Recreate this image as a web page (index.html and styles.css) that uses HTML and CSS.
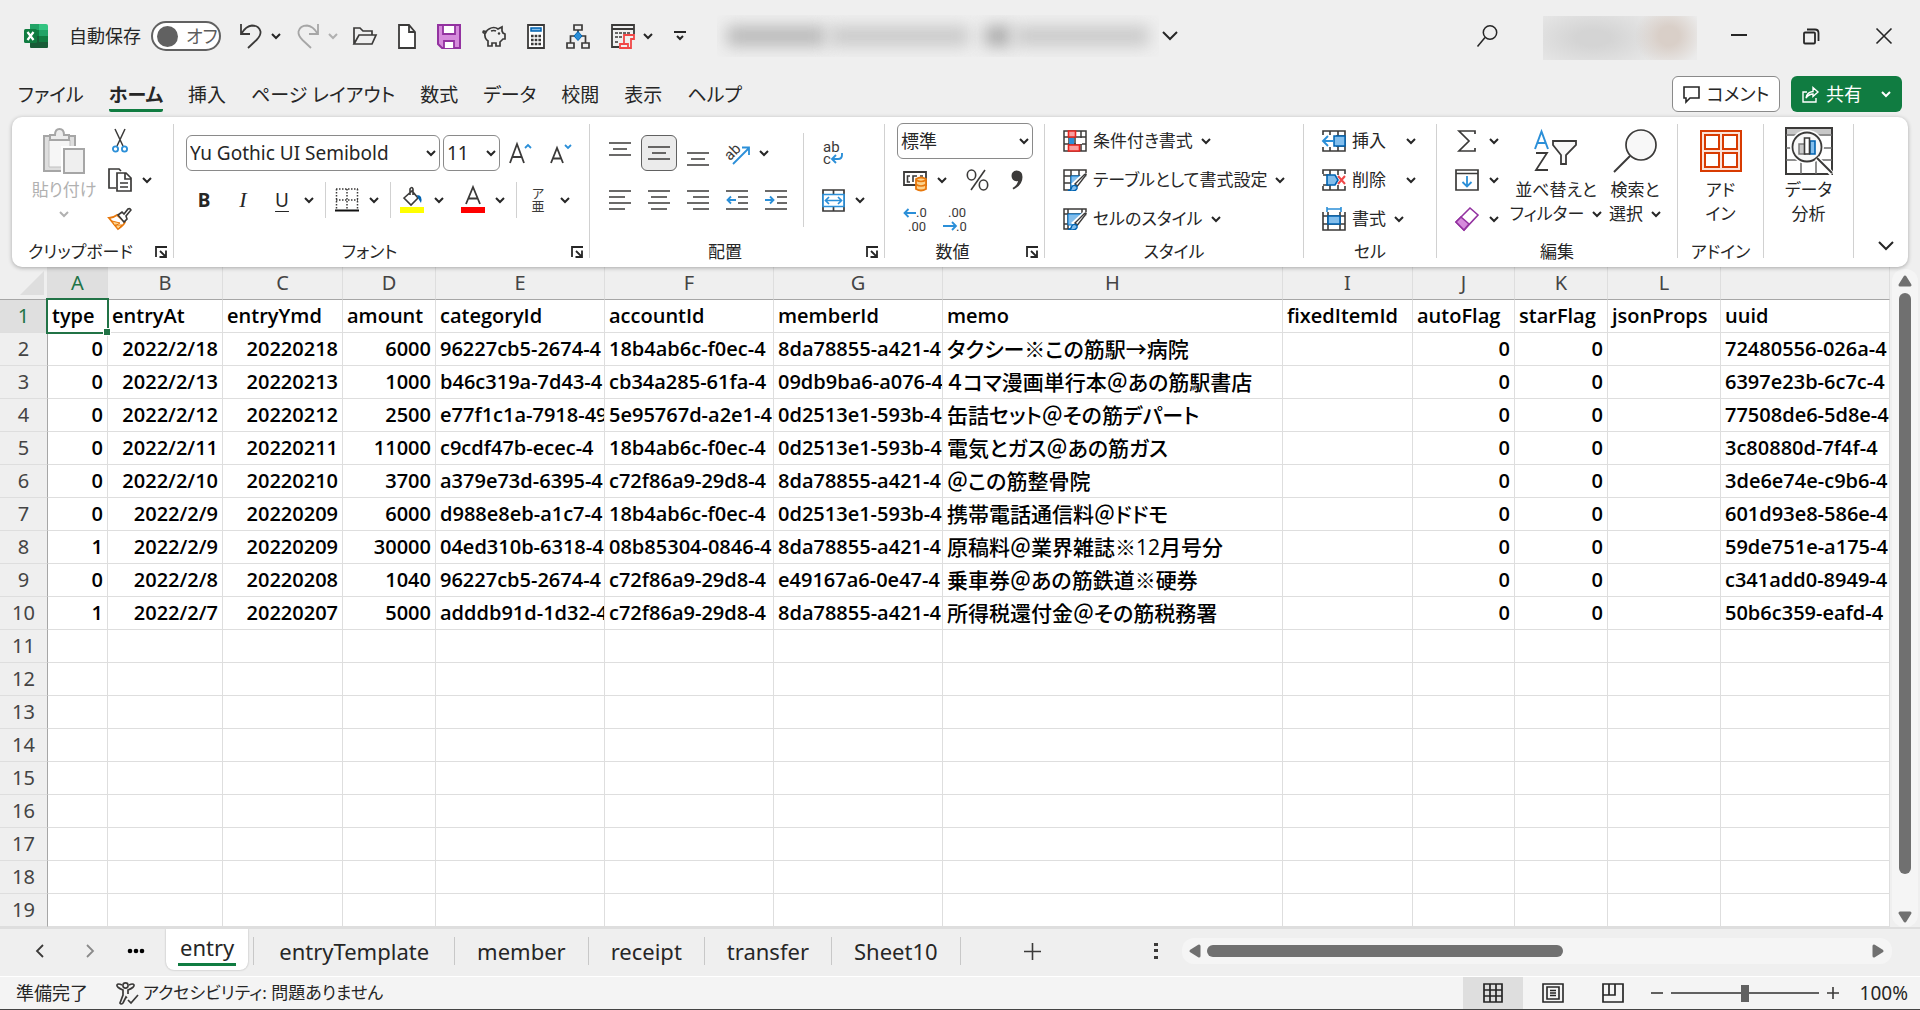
FILE: index.html
```html
<!DOCTYPE html>
<html lang="ja">
<head>
<meta charset="utf-8">
<title>Excel</title>
<link rel="stylesheet" href="styles.css">
</head>
<body>
<svg class="defs" aria-hidden="true">
  <symbol id="chev" viewBox="0 0 10 7"><path d="M1 1l4 4 4-4" fill="none" stroke="currentColor" stroke-width="2"/></symbol>
  <symbol id="bigchev" viewBox="0 0 16 10"><path d="M1 1l7 7 7-7" fill="none" stroke="currentColor" stroke-width="2"/></symbol>
  <symbol id="launch" viewBox="0 0 12 12"><path d="M1 11V1h11M5 5l5 5M11 4.500v6.500H4.500" fill="none" stroke="currentColor" stroke-width="1.800"/></symbol>
  <symbol id="brush" viewBox="0 0 24 22"><path d="M24 7L12 17l-7 5H24z" fill="#fff"/><path d="M8 15L20 4h4v3L13 19z" fill="#fff"/><path d="M12 15L21.500 5.500q2-1.500 1.500.5L14.500 17z" fill="#fff" stroke="#3b3a39" stroke-width="1.400"/><path d="M5 21.500q3.500-.5 3.500-3 1-2.500 3.500-2 2.500.5 2 3-1 2.500-4.500 2.500z" fill="#83beec" stroke="#0063b1" stroke-width="1.400"/></symbol>
</svg>

<header class="titlebar">
  <div class="quick">
    <svg class="logo" width="24" height="24" viewBox="0 0 24 24"><path d="M6 0h9v6H6z" fill="#21a366"/><path d="M15 0h7q2 0 2 2v4h-9z" fill="#33c481"/><path d="M6 6h9v6H6z" fill="#107c41"/><path d="M15 6h9v6h-9z" fill="#21a366"/><path d="M15 12h9v6h-9z" fill="#107c41"/><path d="M6 12h9v6h9v5q0 1-1 1H7q-1 0-1-1z" fill="#185c37"/><rect y="5" width="13" height="14" rx="1.500" fill="#107c41"/><path d="M3.500 8l6 8M9.500 8l-6 8" stroke="#fff" stroke-width="2.200"/></svg>
    <label class="autosave">自動保存<span class="toggle"><input type="checkbox"><span>オフ</span></span></label>
    <button class="tb undo" aria-label="元に戻す"><svg width="24" height="26" viewBox="0 0 24 26"><path d="M2 1v10h9M2.500 10.500Q7 3 13 2.500q7 0 8.500 6 .5 4-4 8.500L9 25" fill="none" stroke="#3b3a39" stroke-width="1.800"/></svg><svg class="chev"><use href="#chev"/></svg></button>
    <button class="tb redo" aria-label="やり直し"><svg width="24" height="26" viewBox="0 0 24 26"><path d="M22 1v10h-9M21.500 10.500Q17 3 11 2.500q-7 0-8.500 6-.5 4 4 8.500L15 25" fill="none" stroke="#a6a6a6" stroke-width="1.800"/></svg><svg class="chev"><use href="#chev"/></svg></button>
    <button class="tb" aria-label="開く"><svg width="24" height="18" viewBox="0 0 24 18"><path d="M1 17V1h6l3 3h9v4M1 17L6 8h17l-4 9z" fill="none" stroke="#3b3a39" stroke-width="1.700"/></svg></button>
    <button class="tb" aria-label="新規"><svg width="18" height="25" viewBox="0 0 18 25"><path d="M1 1h10l6 7v16H1zM11 1v7h6" fill="#fff" stroke="#3b3a39" stroke-width="1.800"/></svg></button>
    <button class="tb" aria-label="保存"><svg width="24" height="25" viewBox="0 0 24 25"><path d="M1 1h22v23H5l-4-4z" fill="#d68bdc" stroke="#9332a0" stroke-width="2"/><path d="M6 1h12v9H6zM7 24v-7h10v7" fill="#fff" stroke="#9332a0" stroke-width="1.800"/></svg></button>
    <button class="tb" aria-label="貯金箱"><svg width="24" height="22" viewBox="0 0 24 22"><path d="M7 4q5-3 9 0l4-2v4l1 2 2 1v5h-2l-3 3v4h-4v-3h-4v3H6v-5q-4-3-3-8Q0 8 1.500 6q2 0 2.500 1 1-2 3-3zM9 6q3-1 5 0" fill="none" stroke="#3b3a39" stroke-width="1.700"/><circle cx="17" cy="8.500" r="1.200" fill="#3b3a39"/></svg></button>
    <button class="tb" aria-label="電卓"><svg width="18" height="25" viewBox="0 0 18 25"><path d="M1 1h16v23H1z" fill="#fff" stroke="#3b3a39" stroke-width="1.800"/><path d="M4 4h10v3H4z" fill="#83beec" stroke="#0063b1" stroke-width="1.500"/><path d="M4 12h10M4 16h10M4 20h10" stroke="#3b3a39" stroke-width="2.600" stroke-dasharray="2.600 1.100"/></svg></button>
    <button class="tb" aria-label="組織図"><svg width="24" height="25" viewBox="0 0 24 25"><path d="M8 1h8v5H8zM1 19h7v5H1zM16 19h7v5h-7zM12 6v4M4.500 19v-7h15v7" fill="none" stroke="#3b3a39" stroke-width="1.700"/><path d="M12 7.500l4 4.500-4 4.500L8 12z" fill="#2b8fd8" stroke="#0063b1"/></svg></button>
    <button class="tb" aria-label="フォーム"><svg width="24" height="26" viewBox="0 0 24 26"><path d="M8 24H1V2h22v9M1 6h22" fill="none" stroke="#3b3a39" stroke-width="1.800"/><path d="M4 10h15M4 14h7M4 19h4" stroke="#3b3a39" stroke-width="1.500" stroke-dasharray="3 1"/><path d="M13 21V12h10v4h-3v9H9v-4h8v4" fill="none" stroke="#f04747" stroke-width="1.800"/></svg><svg class="chev"><use href="#chev"/></svg></button>
    <button class="tb" aria-label="クイック アクセス ツール バーのユーザー設定"><svg width="12" height="10" viewBox="0 0 12 10"><path d="M0 1h12M3 5l3 3 3-3" fill="none" stroke="#262626" stroke-width="2"/></svg></button>
  </div>
  <div class="doctitle" aria-label="ファイル名"><span class="smudge s1"></span><span class="smudge s2"></span><span class="smudge s3"></span><span class="smudge s4"></span></div>
  <svg class="titlechev" width="16" height="10"><use href="#bigchev"/></svg>
  <div class="wincontrols">
    <button aria-label="検索"><svg width="21" height="22" viewBox="0 0 21 22"><circle cx="13" cy="7.500" r="6.700" fill="none" stroke="#262626" stroke-width="1.500"/><path d="M8 12.500L.5 21.500" stroke="#262626" stroke-width="1.500"/></svg></button>
    <div class="account" aria-label="アカウント"></div>
    <button aria-label="最小化"><svg width="16" height="16" viewBox="0 0 16 16"><path d="M0 7h16" stroke="#262626" stroke-width="2"/></svg></button>
    <button aria-label="元に戻す (縮小)"><svg width="17" height="17" viewBox="0 0 17 17"><rect x="1" y="4.500" width="11" height="11" rx="1" fill="none" stroke="#262626" stroke-width="1.800"/><path d="M4 1.500h8q3.500 0 3.500 3.500v8" fill="none" stroke="#262626" stroke-width="1.800"/></svg></button>
    <button aria-label="閉じる"><svg width="16" height="16" viewBox="0 0 16 16"><path d="M.5.5l15 15M15.500.5l-15 15" stroke="#262626" stroke-width="1.600"/></svg></button>
  </div>
</header>

<nav class="menubar">
  <a href="#">ファイル</a><a href="#" class="on">ホーム</a><a href="#">挿入</a><a href="#">ページ レイアウト</a><a href="#">数式</a><a href="#">データ</a><a href="#">校閲</a><a href="#">表示</a><a href="#">ヘルプ</a>
  <button class="comment"><svg width="17" height="17" viewBox="0 0 17 17"><path d="M1 1h15v11H7l-4 4v-4H1z" fill="none" stroke="#262626" stroke-width="1.600"/></svg>コメント</button>
  <button class="share"><svg width="17" height="17" viewBox="0 0 17 17"><path d="M5 6H1v10h13v-4M4 12q1-6 7-6.500V1.500L16 6l-5 4.500V8Q7 8 4 12z" fill="none" stroke="#fff" stroke-width="1.400"/></svg>共有<svg class="chev"><use href="#chev"/></svg></button>
</nav>

<main class="ribbon">
  <section class="group clip">
    <div class="tools">
      <button class="big paste" disabled><span class="slot"><svg width="42" height="46" viewBox="0 0 42 46"><path d="M1 8h31v35H1z" fill="#dedede" stroke="#a6a6a6" stroke-width="2"/><path d="M6 12h21v27H6z" fill="#f6f6f6" stroke="#c0c0c0"/><path d="M7 12V7h5q0-6 4.500-6T21 7h5v5z" fill="#ececec" stroke="#a6a6a6" stroke-width="2"/><path d="M18 18h24v28H18z" fill="#fff"/><path d="M21 21h20v24H21z" fill="#efefef" stroke="#a6a6a6" stroke-width="2"/></svg></span><span>貼り付け</span><span><svg class="chev"><use href="#chev"/></svg></span></button>
      <div class="col">
        <div class="row"><button class="ib" aria-label="切り取り"><svg width="16" height="24" viewBox="0 0 16 24"><path d="M3 0l8 17M13 0L5 17" stroke="#3b3a39" stroke-width="1.500"/><circle cx="3.500" cy="20" r="2.600" fill="#fff" stroke="#2b8fd8" stroke-width="1.800"/><circle cx="12.500" cy="20" r="2.600" fill="#fff" stroke="#2b8fd8" stroke-width="1.800"/></svg></button></div>
        <div class="row"><button class="ib" aria-label="コピー"><svg width="24" height="24" viewBox="0 0 24 24"><path d="M8 20H1V1h10l2 2" fill="none" stroke="#3b3a39" stroke-width="1.700"/><path d="M9 5h9l5 5v13H9zM17 5v6h6M12 15h8M12 19h8" fill="#fff" stroke="#3b3a39" stroke-width="1.700"/></svg></button><button class="cb" aria-label="コピーのオプション"><svg class="chev"><use href="#chev"/></svg></button></div>
        <div class="row"><button class="ib" aria-label="書式のコピー"><svg width="24" height="24" viewBox="0 0 24 24"><path d="M1 11l9 11q6-4 7-7L9 8q-4 3-8 3z" fill="#fff" stroke="#e8780c" stroke-width="1.800"/><path d="M4 14l8 2-5 3zM7 18l7 0-4 4z" fill="#fcd28c" stroke="#e8780c"/><path d="M10 8l4-3 2 2 4-5q2-1 3 1l-5 6 1 3-3 3z" fill="#fff" stroke="#3b3a39" stroke-width="1.600"/></svg></button></div>
      </div>
    </div>
    <div class="cap"><span>クリップボード</span><button aria-label="クリップボードの詳細"><svg width="12" height="12"><use href="#launch"/></svg></button></div>
  </section>
  <div class="sep"></div>

  <section class="group font">
    <div class="tools col wide">
      <div class="row">
        <span class="combo name"><select aria-label="フォント名"><option>Yu Gothic UI Semibold</option></select><svg class="chev"><use href="#chev"/></svg></span>
        <span class="combo size"><select aria-label="フォント サイズ"><option>11</option></select><svg class="chev"><use href="#chev"/></svg></span>
        <button class="ib" aria-label="拡大"><svg width="24" height="24" viewBox="0 0 24 24"><path d="M1 22L8 3l7 19M3.500 16h9" fill="none" stroke="#3b3a39" stroke-width="1.800"/><path d="M16 7l3-3 3 3" fill="none" stroke="#2b8fd8" stroke-width="1.800"/></svg></button>
        <button class="ib" aria-label="縮小"><svg width="24" height="24" viewBox="0 0 24 24"><path d="M3 22L9 7l6 15M5 17.500h8" fill="none" stroke="#3b3a39" stroke-width="1.800"/><path d="M17 4l3 3 3-3" fill="none" stroke="#2b8fd8" stroke-width="1.800"/></svg></button>
      </div>
      <div class="row">
        <button class="ib bold">B</button><button class="ib italic">I</button>
        <span class="split"><button class="ib under">U</button><button class="cb" aria-label="下線の種類"><svg class="chev"><use href="#chev"/></svg></button></span>
        <i class="vs"></i>
        <span class="split"><button class="ib" aria-label="罫線"><svg width="24" height="24" viewBox="0 0 24 24"><path d="M1 1h22M1 12h22M1.500 1v20M12 1v20M22.500 1v20" stroke="#3b3a39" stroke-width="1.500" stroke-dasharray="1.500 1.500"/><path d="M0 22.500h24" stroke="#111" stroke-width="2"/></svg></button><button class="cb" aria-label="罫線の種類"><svg class="chev"><use href="#chev"/></svg></button></span>
        <i class="vs"></i>
        <span class="split"><button class="ib" aria-label="塗りつぶしの色"><svg width="24" height="26" viewBox="0 0 24 26"><path d="M4 11l8-7 6 7-7 7zM10 8V2q2-3 3 0v6" fill="#fff" stroke="#3b3a39" stroke-width="1.600"/><path d="M17 8q6 0 4 8-2-3-3-5z" fill="#0063b1"/><path d="M0 20h24v6H0z" fill="#ff0"/></svg></button><button class="cb" aria-label="塗りつぶしの色を選ぶ"><svg class="chev"><use href="#chev"/></svg></button></span>
        <span class="split spaced"><button class="ib" aria-label="フォントの色"><svg width="24" height="26" viewBox="0 0 24 26"><path d="M5 17l7-17 7 17M7.500 11.500h9" fill="none" stroke="#3b3a39" stroke-width="1.800"/><path d="M0 20h24v6H0z" fill="#f00"/></svg></button><button class="cb" aria-label="フォントの色を選ぶ"><svg class="chev"><use href="#chev"/></svg></button></span>
        <i class="vs"></i>
        <span class="split"><button class="ib ruby"><span>ア</span><span>亜</span></button><button class="cb" aria-label="ふりがなの設定"><svg class="chev"><use href="#chev"/></svg></button></span>
      </div>
    </div>
    <div class="cap"><span>フォント</span><button aria-label="フォントの設定"><svg width="12" height="12"><use href="#launch"/></svg></button></div>
  </section>
  <div class="sep"></div>

  <section class="group align">
    <div class="tools">
      <div class="col wide">
        <div class="row">
          <button class="ib" aria-label="上揃え"><svg class="up" width="22" height="14" viewBox="0 0 22 14"><path d="M0 1h22M4 7h14M0 13h22" stroke="#3b3a39" stroke-width="1.700"/></svg></button>
          <button class="ib on" aria-label="上下中央揃え"><svg width="22" height="14" viewBox="0 0 22 14"><path d="M0 1h22M4 7h14M0 13h22" stroke="#3b3a39" stroke-width="1.700"/></svg></button>
          <button class="ib" aria-label="下揃え"><svg class="down" width="22" height="14" viewBox="0 0 22 14"><path d="M0 1h22M4 7h14M0 13h22" stroke="#3b3a39" stroke-width="1.700"/></svg></button>
          <span class="split"><button class="ib" aria-label="方向"><svg width="26" height="26" viewBox="0 0 26 26"><text x="0" y="17" transform="rotate(-45 8 12)" class="ab">ab</text><path d="M9 24L25 8M18 7.500h7V15" fill="none" stroke="#2b8fd8" stroke-width="1.800"/></svg></button><button class="cb" aria-label="方向の設定"><svg class="chev"><use href="#chev"/></svg></button></span>
        </div>
        <div class="row">
          <button class="ib" aria-label="左揃え"><svg width="22" height="20" viewBox="0 0 22 20"><path d="M0 1h22M0 7h16M0 13h22M0 19h16" stroke="#3b3a39" stroke-width="1.700"/></svg></button>
          <button class="ib" aria-label="中央揃え"><svg width="22" height="20" viewBox="0 0 22 20"><path d="M0 1h22M3 7h16M0 13h22M3 19h16" stroke="#3b3a39" stroke-width="1.700"/></svg></button>
          <button class="ib" aria-label="右揃え"><svg width="22" height="20" viewBox="0 0 22 20"><path d="M0 1h22M6 7h16M0 13h22M6 19h16" stroke="#3b3a39" stroke-width="1.700"/></svg></button>
          <button class="ib" aria-label="インデントを減らす"><svg width="22" height="20" viewBox="0 0 22 20"><path d="M0 1h22M12 7h10M12 13h10M0 19h22" stroke="#3b3a39" stroke-width="1.700"/><path d="M10 10H1.500M5 6.500L1.500 10 5 13.500" fill="none" stroke="#2b8fd8" stroke-width="1.800"/></svg></button>
          <button class="ib" aria-label="インデントを増やす"><svg width="22" height="20" viewBox="0 0 22 20"><path d="M0 1h22M12 7h10M12 13h10M0 19h22" stroke="#3b3a39" stroke-width="1.700"/><path d="M0 10h8.500M5 6.500L8.500 10 5 13.500" fill="none" stroke="#2b8fd8" stroke-width="1.800"/></svg></button>
        </div>
      </div>
      <i class="vs tall"></i>
      <div class="col wide">
        <div class="row"><button class="ib" aria-label="折り返して全体を表示する"><svg width="22" height="26" viewBox="0 0 22 26"><text x="1" y="12" class="ab">ab</text><text x="1" y="24" class="ab">c</text><path d="M20 13v2q0 4-4 4h-5M14 15l-4 4 4 4" fill="none" stroke="#2b8fd8" stroke-width="1.900"/></svg></button></div>
        <div class="row split"><button class="ib" aria-label="セルを結合して中央揃え"><svg width="23" height="23" viewBox="0 0 23 23"><path d="M1 1h21v21H1zM11.500 1v21" fill="#fff" stroke="#3b3a39" stroke-width="1.700"/><path d="M1 5.500h21v12H1z" fill="#fff" stroke="#2b8fd8" stroke-width="1.700"/><path d="M4 11.500h15M7 8l-3.500 3.500L7 15M16 8l3.500 3.500L16 15" fill="none" stroke="#2b8fd8" stroke-width="1.700"/></svg></button><button class="cb" aria-label="結合の種類"><svg class="chev"><use href="#chev"/></svg></button></div>
      </div>
    </div>
    <div class="cap"><span>配置</span><button aria-label="配置の設定"><svg width="12" height="12"><use href="#launch"/></svg></button></div>
  </section>
  <div class="sep"></div>

  <section class="group number">
    <div class="tools col">
      <span class="combo format"><select aria-label="数値の書式"><option>標準</option></select><svg class="chev"><use href="#chev"/></svg></span>
      <div class="row">
        <span class="split"><button class="ib" aria-label="通貨表示形式"><svg width="24" height="22" viewBox="0 0 24 22"><path d="M1 3h22v13H1z" fill="#fff" stroke="#3b3a39" stroke-width="1.800"/><path d="M7 7H4.500v6H7M14 7h-4v6M17 7h3" fill="none" stroke="#3b3a39" stroke-width="1.600"/><path d="M13 10q5-3 10 0v10q-5 3-10 0z" fill="#fcd28c" stroke="#e8780c" stroke-width="1.800"/><path d="M13 11q5 3 10 0M13 15.500q5 3 10 0" fill="none" stroke="#e8780c" stroke-width="1.500"/></svg></button><button class="cb" aria-label="通貨の種類"><svg class="chev"><use href="#chev"/></svg></button></span>
        <button class="ib percent" aria-label="パーセント"><svg width="23" height="22" viewBox="0 0 23 22"><path d="M19 1L5 21" stroke="#3b3a39" stroke-width="1.600"/><ellipse cx="5.500" cy="6" rx="4.200" ry="5" fill="none" stroke="#3b3a39" stroke-width="1.600"/><ellipse cx="17.500" cy="16" rx="4.200" ry="5" fill="none" stroke="#3b3a39" stroke-width="1.600"/></svg></button>
        <button class="ib spaced" aria-label="桁区切り"><svg width="12" height="20" viewBox="0 0 12 20"><path d="M5.500.5q6 0 6 6.500 0 8-9 12.500l-1-1.500q5-3 5.500-7-6 1-6.500-5 0-5 5-5.500z" fill="#3b3a39"/></svg></button>
      </div>
      <div class="row">
        <button class="ib" aria-label="小数点以下の表示桁数を増やす"><svg width="26" height="28" viewBox="0 0 26 28"><text x="14" y="12" class="dec">.0</text><text x="6" y="26" class="dec">.00</text><path d="M14 8H2.500M6.500 4l-4 4 4 4" fill="none" stroke="#2b8fd8" stroke-width="1.800"/></svg></button>
        <button class="ib spaced" aria-label="小数点以下の表示桁数を減らす"><svg width="26" height="28" viewBox="0 0 26 28"><text x="6" y="12" class="dec">.00</text><text x="14" y="26" class="dec">.0</text><path d="M1 21h12.500M10 17l4 4-4 4" fill="none" stroke="#2b8fd8" stroke-width="1.800"/></svg></button>
      </div>
    </div>
    <div class="cap"><span>数値</span><button aria-label="数値の設定"><svg width="12" height="12"><use href="#launch"/></svg></button></div>
  </section>
  <div class="sep"></div>

  <section class="group styles">
    <div class="tools col">
      <button class="tx"><svg width="24" height="22" viewBox="0 0 24 22"><path d="M1 1h22v20H1zM1 7h22M1 14h22M6 1v20M12 1v20M18 1v20" fill="#fff" stroke="#3b3a39" stroke-width="1.500"/><path d="M6 8h5v6H6z" fill="#2b8fd8"/><path d="M5.500 1h7v6h-7zM5.500 15h11v6h-11z" fill="#f9a0a0" stroke="#e8251f" stroke-width="1.600"/><path d="M13 8h6v6h-6z" fill="#fff"/></svg>条件付き書式<svg class="chev"><use href="#chev"/></svg></button>
      <button class="tx"><svg width="24" height="22" viewBox="0 0 24 22"><path d="M1 1h22v20H1zM1 7h22M1 14h22M8 1v20M16 1v20" fill="#fff" stroke="#3b3a39" stroke-width="1.500"/><path d="M8 7h15v14H8z" fill="#83beec" stroke="#0078d4"/><use href="#brush" width="24" height="22"/></svg>テーブルとして書式設定<svg class="chev"><use href="#chev"/></svg></button>
      <button class="tx"><svg width="24" height="22" viewBox="0 0 24 22"><path d="M1 1h22v20H1zM1 6h22M5 1v20M19 1v20M1 16h22" fill="#fff" stroke="#3b3a39" stroke-width="1.500"/><path d="M5 6h14v11H5z" fill="#83beec" stroke="#0078d4"/><use href="#brush" width="24" height="22"/></svg>セルのスタイル<svg class="chev"><use href="#chev"/></svg></button>
    </div>
    <div class="cap"><span>スタイル</span></div>
  </section>
  <div class="sep"></div>

  <section class="group cells">
    <div class="tools col">
      <button class="tx far"><svg width="24" height="22" viewBox="0 0 24 22"><path d="M1 1h22v20H1zM1 6h22M1 16h22M8 1v20M16 1v20" fill="#fff" stroke="#3b3a39" stroke-width="1.600"/><path d="M0 5h14v12H0z" fill="#fff"/><path d="M12 6h11v10H12z" fill="#83beec" stroke="#0063b1" stroke-width="1.500"/><path d="M12 11H1.500M6 6l-5 5 5 5" fill="none" stroke="#2b8fd8" stroke-width="1.900"/></svg>挿入<svg class="chev"><use href="#chev"/></svg></button>
      <button class="tx far"><svg width="24" height="22" viewBox="0 0 24 22"><path d="M1 5V1h22v4M1 17v4h22v-4M8 1v5M16 1v5M8 16v5M16 16v5M1 6h6M1 16h6" fill="none" stroke="#3b3a39" stroke-width="1.600"/><path d="M5 6h8l3 5-3 5H5z" fill="#83beec" stroke="#0063b1" stroke-width="1.600"/><path d="M16 7l7 8M23 7l-7 8" stroke="#f04747" stroke-width="2"/></svg>削除<svg class="chev"><use href="#chev"/></svg></button>
      <button class="tx"><svg width="24" height="24" viewBox="0 0 24 24"><path d="M1 5v18h22V5M1 9h22M1 17h22M6 5v18M18 5v18" fill="none" stroke="#3b3a39" stroke-width="1.600"/><path d="M6 9h12v8H6z" fill="#83beec" stroke="#0063b1" stroke-width="1.600"/><path d="M5 2h14M5 0v5M19 0v5" stroke="#2b8fd8" stroke-width="1.600"/></svg>書式<svg class="chev"><use href="#chev"/></svg></button>
    </div>
    <div class="cap"><span>セル</span></div>
  </section>
  <div class="sep"></div>

  <section class="group edit">
    <div class="tools">
      <div class="col">
        <div class="row"><button class="ib" aria-label="合計"><svg width="18" height="22" viewBox="0 0 18 22"><path d="M17 4V1H1l10 10L1 21h16v-3" fill="none" stroke="#3b3a39" stroke-width="1.700"/></svg></button><button class="cb" aria-label="関数の種類"><svg class="chev"><use href="#chev"/></svg></button></div>
        <div class="row"><button class="ib" aria-label="フィル"><svg width="24" height="22" viewBox="0 0 24 22"><path d="M1 1h22v20H1zM1 4.500h22" fill="#fff" stroke="#3b3a39" stroke-width="1.700"/><path d="M12 7v10M7.500 13l4.500 4.500 4.500-4.500" fill="none" stroke="#2b8fd8" stroke-width="1.800"/></svg></button><button class="cb" aria-label="フィルの種類"><svg class="chev"><use href="#chev"/></svg></button></div>
        <div class="row"><button class="ib" aria-label="クリア"><svg width="24" height="24" viewBox="0 0 24 24"><path d="M1 15L15 1l8 7L9 23z" fill="#fff" stroke="#9332a0" stroke-width="1.600"/><path d="M1 15l5-5 8 7-5 6z" fill="#d68bdc" stroke="#9332a0" stroke-width="1.600"/></svg></button><button class="cb" aria-label="クリアの種類"><svg class="chev"><use href="#chev"/></svg></button></div>
      </div>
      <button class="big sort"><span class="slot"><svg width="44" height="42" viewBox="0 0 44 42"><path d="M1 19L7.500 1.500 14 19M3.500 13h8" fill="none" stroke="#2b8fd8" stroke-width="2"/><path d="M2 23h11L2 40h12" fill="none" stroke="#3b3a39" stroke-width="1.800"/><path d="M19 11h23v4L32 25v9h-5v-9L19 15z" fill="#f8f8f8" stroke="#3b3a39" stroke-width="1.800"/></svg></span><span>並べ替えと</span><span>フィルター<svg class="chev"><use href="#chev"/></svg></span></button>
      <button class="big find"><span class="slot"><svg width="44" height="44" viewBox="0 0 44 44"><circle cx="28" cy="16" r="15" fill="#f8f8f8" stroke="#3b3a39" stroke-width="1.700"/><path d="M17 27L1 43" stroke="#3b3a39" stroke-width="1.900"/></svg></span><span>検索と</span><span>選択<svg class="chev"><use href="#chev"/></svg></span></button>
    </div>
    <div class="cap"><span>編集</span></div>
  </section>
  <div class="sep"></div>

  <section class="group addin">
    <div class="tools"><button class="big"><span class="slot"><svg width="42" height="42" viewBox="0 0 42 42"><path d="M1 1h40v40H1z" fill="#fbe3d8" stroke="#d83b01" stroke-width="2"/><path d="M5 5h14v14H5zM23 5h14v14H23zM5 23h14v14H5zM23 23h14v14H23z" fill="#fff" stroke="#d83b01" stroke-width="2"/></svg></span><span>アド</span><span>イン</span></button></div>
    <div class="cap"><span>アドイン</span></div>
  </section>
  <div class="sep"></div>

  <section class="group data">
    <div class="tools"><button class="big"><span class="slot"><svg width="48" height="48" viewBox="0 0 48 48"><path d="M1 1h46v46H1z" fill="#fff" stroke="#3b3a39" stroke-width="2"/><path d="M2 2h44v5H2z" fill="#c8c8c8"/><path d="M1 8h46M1 21h46M1 33h46M16 34v13M31 34v13" stroke="#6a6a6a" stroke-width="1.500"/><circle cx="22" cy="20" r="17" fill="#fff"/><circle cx="22" cy="20" r="14.500" fill="#f8f8f8" stroke="#3b3a39" stroke-width="1.800"/><path d="M14 17h6v10h-6z" fill="#c8c8c8" stroke="#7a7a7a" stroke-width="1.500"/><path d="M25 14h5v13h-5z" fill="#83beec" stroke="#0063b1" stroke-width="1.600"/><path d="M19.500 11h5v16h-5z" fill="#fff" stroke="#3b3a39" stroke-width="1.600"/><path d="M32 31l15 16" stroke="#fff" stroke-width="5"/><path d="M32 31l15 15" stroke="#3b3a39" stroke-width="2"/></svg></span><span>データ</span><span>分析</span></button></div>
  </section>
  <div class="sep"></div>
  <button class="collapse" aria-label="リボンの表示オプション"><svg width="16" height="10"><use href="#bigchev"/></svg></button>
</main>

<div class="sheet">
<table>
<colgroup><col class="c-h"><col class="c-a"><col class="c-b"><col class="c-c"><col class="c-d"><col class="c-u"><col class="c-u"><col class="c-u"><col class="c-m"><col class="c-i"><col class="c-j"><col class="c-d"><col class="c-l"><col></colgroup>
<thead><tr><th class="corner"><svg width="24" height="24" viewBox="0 0 24 24"><path d="M24 0v24H0z" fill="#dedede"/></svg></th><th class="cur">A</th><th>B</th><th>C</th><th>D</th><th>E</th><th>F</th><th>G</th><th>H</th><th>I</th><th>J</th><th>K</th><th>L</th><th></th></tr></thead>
<tbody>
<tr><th class="cur">1</th><td class="sel">type</td><td>entryAt</td><td>entryYmd</td><td>amount</td><td>categoryId</td><td>accountId</td><td>memberId</td><td>memo</td><td>fixedItemId</td><td>autoFlag</td><td>starFlag</td><td>jsonProps</td><td>uuid</td></tr>
<tr><th>2</th><td class="n">0</td><td class="n">2022/2/18</td><td class="n">20220218</td><td class="n">6000</td><td>96227cb5-2674-4</td><td>18b4ab6c-f0ec-4</td><td>8da78855-a421-4</td><td class="j">タクシー※この筋駅→病院</td><td></td><td class="n">0</td><td class="n">0</td><td></td><td>72480556-026a-4</td></tr>
<tr><th>3</th><td class="n">0</td><td class="n">2022/2/13</td><td class="n">20220213</td><td class="n">1000</td><td>b46c319a-7d43-4</td><td>cb34a285-61fa-4</td><td>09db9ba6-a076-4</td><td class="j">４コマ漫画単行本＠あの筋駅書店</td><td></td><td class="n">0</td><td class="n">0</td><td></td><td>6397e23b-6c7c-4</td></tr>
<tr><th>4</th><td class="n">0</td><td class="n">2022/2/12</td><td class="n">20220212</td><td class="n">2500</td><td>e77f1c1a-7918-49</td><td>5e95767d-a2e1-4</td><td>0d2513e1-593b-4</td><td class="j">缶詰セット＠その筋デパート</td><td></td><td class="n">0</td><td class="n">0</td><td></td><td>77508de6-5d8e-4</td></tr>
<tr><th>5</th><td class="n">0</td><td class="n">2022/2/11</td><td class="n">20220211</td><td class="n">11000</td><td>c9cdf47b-ecec-4</td><td>18b4ab6c-f0ec-4</td><td>0d2513e1-593b-4</td><td class="j">電気とガス＠あの筋ガス</td><td></td><td class="n">0</td><td class="n">0</td><td></td><td>3c80880d-7f4f-4</td></tr>
<tr><th>6</th><td class="n">0</td><td class="n">2022/2/10</td><td class="n">20220210</td><td class="n">3700</td><td>a379e73d-6395-4</td><td>c72f86a9-29d8-4</td><td>8da78855-a421-4</td><td class="j">＠この筋整骨院</td><td></td><td class="n">0</td><td class="n">0</td><td></td><td>3de6e74e-c9b6-4</td></tr>
<tr><th>7</th><td class="n">0</td><td class="n">2022/2/9</td><td class="n">20220209</td><td class="n">6000</td><td>d988e8eb-a1c7-4</td><td>18b4ab6c-f0ec-4</td><td>0d2513e1-593b-4</td><td class="j">携帯電話通信料＠ドドモ</td><td></td><td class="n">0</td><td class="n">0</td><td></td><td>601d93e8-586e-4</td></tr>
<tr><th>8</th><td class="n">1</td><td class="n">2022/2/9</td><td class="n">20220209</td><td class="n">30000</td><td>04ed310b-6318-4</td><td>08b85304-0846-4</td><td>8da78855-a421-4</td><td class="j">原稿料＠業界雑誌※12月号分</td><td></td><td class="n">0</td><td class="n">0</td><td></td><td>59de751e-a175-4</td></tr>
<tr><th>9</th><td class="n">0</td><td class="n">2022/2/8</td><td class="n">20220208</td><td class="n">1040</td><td>96227cb5-2674-4</td><td>c72f86a9-29d8-4</td><td>e49167a6-0e47-4</td><td class="j">乗車券＠あの筋鉄道※硬券</td><td></td><td class="n">0</td><td class="n">0</td><td></td><td>c341add0-8949-4</td></tr>
<tr><th>10</th><td class="n">1</td><td class="n">2022/2/7</td><td class="n">20220207</td><td class="n">5000</td><td>adddb91d-1d32-4</td><td>c72f86a9-29d8-4</td><td>8da78855-a421-4</td><td class="j">所得税還付金＠その筋税務署</td><td></td><td class="n">0</td><td class="n">0</td><td></td><td>50b6c359-eafd-4</td></tr>
<tr><th>11</th><td><td><td><td><td><td><td><td><td><td><td><td><td></tr>
<tr><th>12</th><td><td><td><td><td><td><td><td><td><td><td><td><td></tr>
<tr><th>13</th><td><td><td><td><td><td><td><td><td><td><td><td><td></tr>
<tr><th>14</th><td><td><td><td><td><td><td><td><td><td><td><td><td></tr>
<tr><th>15</th><td><td><td><td><td><td><td><td><td><td><td><td><td></tr>
<tr><th>16</th><td><td><td><td><td><td><td><td><td><td><td><td><td></tr>
<tr><th>17</th><td><td><td><td><td><td><td><td><td><td><td><td><td></tr>
<tr><th>18</th><td><td><td><td><td><td><td><td><td><td><td><td><td></tr>
<tr><th>19</th><td><td><td><td><td><td><td><td><td><td><td><td><td></tr>
</tbody>
</table>
<div class="vscroll">
  <button aria-label="上へ"><svg width="14" height="12" viewBox="0 0 14 12"><path d="M7 2l5 8H2z" fill="#707070" stroke="#707070" stroke-width="3" stroke-linejoin="round"/></svg></button>
  <div class="vtrack"><div class="vthumb"></div></div>
  <button aria-label="下へ"><svg width="14" height="12" viewBox="0 0 14 12"><path d="M7 10l5-8H2z" fill="#707070" stroke="#707070" stroke-width="3" stroke-linejoin="round"/></svg></button>
</div>
</div>

<footer>
<div class="sheetbar">
  <div class="sheetnav">
    <button aria-label="前のシート"><svg width="10" height="14" viewBox="0 0 10 14"><path d="M8 1L2 7l6 6" fill="none" stroke="#3b3a39" stroke-width="1.800"/></svg></button>
    <button aria-label="次のシート"><svg width="10" height="14" viewBox="0 0 10 14"><path d="M2 1l6 6-6 6" fill="none" stroke="#8a8a8a" stroke-width="1.800"/></svg></button>
    <button class="more" aria-label="シート一覧"><svg width="18" height="6" viewBox="0 0 18 6"><circle cx="3" cy="3" r="2.300"/><circle cx="9" cy="3" r="2.300"/><circle cx="15" cy="3" r="2.300"/></svg></button>
  </div>
  <button class="tab active"><span>entry</span></button>
  <button class="tab first">entryTemplate</button><button class="tab">member</button><button class="tab">receipt</button><button class="tab">transfer</button><button class="tab">Sheet10</button>
  <button class="plus" aria-label="新しいシート"><svg width="17" height="17" viewBox="0 0 17 17"><path d="M8.500 0v17M0 8.500h17" stroke="#3b3a39" stroke-width="1.600"/></svg></button>
  <div class="grip"><svg width="4" height="16" viewBox="0 0 4 16"><path d="M0 0h4v3H0zM0 6h4v3H0zM0 13h4v3H0z" fill="#3b3a39"/></svg></div>
  <div class="hscroll">
    <button aria-label="左へ"><svg width="12" height="14" viewBox="0 0 12 14"><path d="M2 7l8-5v10z" fill="#707070" stroke="#707070" stroke-width="3" stroke-linejoin="round"/></svg></button>
    <div class="htrack"><div class="hthumb"></div></div>
    <button aria-label="右へ"><svg width="12" height="14" viewBox="0 0 12 14"><path d="M10 7L2 2v10z" fill="#707070" stroke="#707070" stroke-width="3" stroke-linejoin="round"/></svg></button>
  </div>
</div>
<div class="status">
  <span>準備完了</span>
  <a href="#" class="a11y"><svg width="23" height="23" viewBox="0 0 23 23"><circle cx="9.500" cy="3.500" r="2.600" fill="none" stroke="#3b3a39" stroke-width="1.600"/><path d="M6 3Q2 1 1 3t6 5v5L4 21q1 2 3 0l3-6 1 1M13 3q4-2 5 0t-6 5v4M12 18l3 3 7-8" fill="none" stroke="#3b3a39" stroke-width="1.700"/></svg>アクセシビリティ: 問題ありません</a>
  <div class="views">
    <button class="on" aria-label="標準"><svg width="20" height="20" viewBox="0 0 20 20"><path d="M1 1h18v18H1zM1 7h18M1 13h18M7 1v18M13 1v18" fill="none" stroke="#262626" stroke-width="1.700"/></svg></button>
    <button aria-label="ページ レイアウト"><svg width="22" height="20" viewBox="0 0 22 20"><path d="M1 1h20v18H1zM5 4h12v12H5zM8 7.500h6M8 10h6M8 12.500h6" fill="none" stroke="#262626" stroke-width="1.600"/></svg></button>
    <button aria-label="改ページ プレビュー"><svg width="22" height="20" viewBox="0 0 22 20"><path d="M1 1h20v18H1zM1 12h12V1M7 1v11" fill="none" stroke="#262626" stroke-width="1.700"/></svg></button>
  </div>
  <div class="zoom">
    <button aria-label="縮小"><svg width="12" height="12" viewBox="0 0 12 12"><path d="M0 6h12" stroke="#3b3a39" stroke-width="1.600"/></svg></button>
    <input type="range" min="0" max="100" value="50" aria-label="ズーム">
    <button aria-label="拡大"><svg width="12" height="12" viewBox="0 0 12 12"><path d="M0 6h12M6 0v12" stroke="#3b3a39" stroke-width="1.600"/></svg></button>
    <span>100%</span>
  </div>
</div>
</footer>
</body>
</html>
```
FILE: styles.css
```css
* { box-sizing: border-box; }
body {
  margin: 0;
  min-width: 1860px;
  background: #efefef;
  color: #262626;
  font: 18px/24px "Noto Sans", "Noto Sans CJK JP", sans-serif;
  font-feature-settings: "palt";
}
button {
  display: inline-flex;
  align-items: center;
  justify-content: center;
  padding: 0;
  border: 0;
  background: none;
  color: inherit;
  font: inherit;
  font-feature-settings: inherit;
  white-space: nowrap;
}
a { color: inherit; text-decoration: none; }
svg { display: block; flex: none; overflow: visible; }
.defs { position: absolute; width: 0; height: 0; }
.chev { width: 10px; height: 7px; }

/* Title bar */
.titlebar { display: flex; align-items: center; height: 72px; padding: 0 28px 0 24px; }
.quick { display: flex; align-items: center; gap: 21px; }
.autosave { display: flex; align-items: center; gap: 10px; margin-right: -3px; }
.toggle {
  display: flex;
  align-items: center;
  gap: 8px;
  width: 70px;
  height: 30px;
  padding-left: 4px;
  border: 2px solid #616161;
  border-radius: 15px;
  background: #fff;
  color: #5c5c5c;
}
.toggle input {
  appearance: none;
  width: 21px;
  height: 21px;
  margin: 0;
  border-radius: 50%;
  background: #616161;
}
.tb { gap: 8px; }
.redo { color: #b0b0b0; margin: 0 -6px; }
.doctitle { display: flex; align-items: center; gap: 4px; width: 442px; height: 42px; margin-left: 31px; padding: 0 10px; overflow: hidden; }
.smudge { height: 20px; filter: blur(8px); }
.s1 { width: 100px; background: #b8b8b8; }
.s2 { width: 142px; background: #c9c9c9; }
.s3 { width: 26px; margin-left: 12px; background: #a8a8a8; }
.s4 { width: 136px; background: #c9c9c9; }
.titlechev { margin-left: 3px; }
.wincontrols { display: flex; align-items: center; margin-left: auto; }
.wincontrols button { margin-left: 56px; }
.account {
  width: 154px;
  height: 44px;
  margin: 4px -22px 0 45px;
  background:
    radial-gradient(ellipse 34px 32px at 126px 20px, #d9cfc8 30%, transparent),
    radial-gradient(ellipse 84px 40px at 50px 22px, #d4d4d4 20%, transparent),
    #ebebeb;
}

/* Ribbon tabs */
.menubar { display: flex; height: 45px; padding: 4px 18px 0; font-size: 19px; }
.menubar a { height: 36px; margin-right: 25px; padding-top: 7px; border-bottom: 3px solid transparent; white-space: nowrap; }
.menubar .on { border-radius: 2px; border-color: #107c41; font-weight: 700; }
.comment, .share { height: 36px; gap: 7px; border-radius: 6px; font-size: 18px; }
.comment { width: 108px; margin-left: auto; border: 1px solid #8a8a8a; background: #fff; }
.share { width: 111px; margin-left: 11px; background: #107c41; color: #fff; }
.share .chev { margin-left: 12px; }

/* Ribbon */
.ribbon {
  position: relative;
  display: flex;
  height: 150px;
  margin: 0 12px;
  border-radius: 10px;
  background: #fff;
  box-shadow: 0 1px 4px rgba(0, 0, 0, .3);
  font-size: 17px;
}
.sep { width: 1px; margin: 7px 0 9px; background: #d1d1d1; }
.group { display: flex; flex-direction: column; flex: none; padding: 6px 0 5px; }
.clip { width: 161px; }
.font { width: 415px; }
.align { width: 294px; }
.number { width: 159px; }
.styles { width: 258px; }
.cells { width: 132px; }
.edit { width: 240px; }
.addin { width: 85px; }
.data { width: 89px; }
.tools { display: flex; flex: 1; padding: 0 12px; }
.col { display: flex; flex-direction: column; align-items: flex-start; gap: 3px; }
.col.wide { gap: 11px; padding-top: 12px; }
.row, .split { display: flex; align-items: center; }
.wide .row { gap: 3px; }
.wide .row.split { gap: 0; }
.ib { width: 36px; height: 36px; border-radius: 6px; }
.ib.on { border: 1px solid #616161; background: #ebebeb; }
.cb { width: 18px; height: 36px; }
.spaced { margin-left: 4px; }
.percent { margin-left: 8px; }
.vs { width: 1px; height: 36px; margin-left: 4px; background: #d1d1d1; }
.vs.tall { height: 94px; margin: 10px 11px 0 9px; }
.up { margin-bottom: 8px; }
.down { margin-top: 12px; }
.align .tools { padding-right: 0; }
.bold { font-weight: 700; font-size: 19px; }
.italic { font: italic 22px "Liberation Serif", serif; }
.under { font-size: 19px; text-decoration: underline; text-underline-offset: 4px; }
.ruby { flex-direction: column; font-size: 13px; line-height: 13px; color: #3b3a39; }
.ab { font: 15px Roboto, sans-serif; fill: #3b3a39; }
.dec { font: 13px Roboto, sans-serif; fill: #3b3a39; }
.clip .tools { padding: 0 12px 0 14px; }
.paste { width: 76px; color: #b1b1b1; }
.edit .tools { padding-right: 0; }
.sort { width: 82px; margin-left: 12px; }
.find { width: 60px; margin-left: 8px; }
.addin .tools, .data .tools { padding: 0; justify-content: center; }
.big { flex-direction: column; justify-content: flex-start; padding-top: 4px; }
.big span { display: flex; align-items: center; height: 24px; gap: 8px; }
.big .slot { height: 48px; margin-bottom: 3px; justify-content: center; }
.tx { height: 36px; gap: 6px; padding: 0 6px; }
.tx .chev { margin-left: 2px; }
.tx.far { width: 106px; }
.tx.far .chev { margin-left: auto; }
.combo { display: grid; align-items: center; height: 36px; }
.combo select, .combo svg { grid-area: 1 / 1; }
.combo svg { justify-self: end; margin-right: 4px; pointer-events: none; }
.combo select {
  appearance: none;
  width: 100%;
  height: 36px;
  padding: 0 3px;
  border: 1px solid #8a8a8a;
  border-radius: 6px;
  background: #fff;
  color: #262626;
  font: inherit;
  font-size: 18px;
}
.combo.name select, .combo.size select { font-size: 19px; }
.name { width: 254px; }
.size { width: 57px; }
.format { width: 136px; }
.cap { display: flex; align-items: center; height: 20px; }
.cap span { flex: 1; text-align: center; }
.cap button { width: 24px; }
.collapse { align-self: flex-end; margin: 0 14px 16px auto; }

/* Worksheet */
.sheet { display: flex; border-bottom: 2px solid #dedede; }
table { flex: 1; width: 100%; table-layout: fixed; border-spacing: 0; font-size: 20px; line-height: 32px; }
.c-h { width: 48px; }
.c-a { width: 60px; }
.c-b { width: 115px; }
.c-c { width: 120px; }
.c-d { width: 93px; }
.c-u { width: 169px; }
.c-m { width: 340px; }
.c-i { width: 130px; }
.c-j { width: 102px; }
.c-l { width: 113px; }
td, th {
  height: 33px;
  padding: 0 4px;
  border-right: 1px solid #dedede;
  border-bottom: 1px solid #dedede;
  overflow: hidden;
  white-space: nowrap;
  text-align: left;
}
td { background: #fff; color: #000; font-family: "Open Sans", "Noto Sans CJK JP", sans-serif; font-weight: 600; }
th { background: #efefef; color: #444; font-weight: 400; text-align: center; }
thead th { border-bottom-color: #a6a6a6; line-height: 28px; vertical-align: middle; }
tbody th { border-right-color: #a6a6a6; }
.corner svg { margin-left: 16px; }
.cur { background: #dfdfdf; color: #217346; }
td.n { text-align: right; }
td.j { font-size: 21px; font-weight: 500; }
td.sel { position: relative; overflow: visible; }
.sel::before { content: ""; position: absolute; inset: -2px; border: 2px solid #217346; }
.sel::after { content: ""; position: absolute; right: -3px; bottom: -3px; width: 6px; height: 6px; background: #217346; outline: 1px solid #fff; }
.vscroll { display: flex; flex-direction: column; align-items: center; gap: 6px; width: 26px; margin: 2px 2px 0; padding: 6px 0 4px; border-radius: 12px; background: #f5f5f5; }
.vtrack { flex: 1; }
.vthumb { width: 12px; height: 95%; border-radius: 6px; background: #707070; }

/* Sheet tabs */
.sheetbar { display: flex; align-items: center; height: 47px; padding: 0 28px 3px 0; }
.sheetnav { display: flex; align-items: center; gap: 40px; width: 166px; padding-left: 35px; }
.more { margin-left: -8px; }
.tab { height: 28px; padding: 0 22px; border-right: 1px solid #c8c8c8; font-size: 22px; }
.tab.first { padding: 0 25px; border-left: 1px solid #c8c8c8; }
.tab.active { align-self: flex-start; height: 41px; margin-right: 5px; padding: 0 12px; border: 0; border-radius: 0 0 8px 8px; background: #fff; box-shadow: 0 0 2px rgba(0, 0, 0, .3); clip-path: inset(0 -4px -4px -4px); }
.tab.active span { padding: 0 2px 2px; border-bottom: 3px solid #107c41; line-height: 28px; }
.plus { margin-left: 63px; }
.grip { margin-left: auto; margin-right: 24px; }
.hscroll { display: flex; align-items: center; gap: 6px; width: 710px; height: 26px; padding: 0 8px 0 7px; border-radius: 12px; background: #f5f5f5; }
.htrack { flex: 1; }
.hthumb { width: 54%; height: 12px; border-radius: 6px; background: #707070; }

/* Status bar */
.status { display: flex; align-items: center; height: 35px; padding: 0 12px 0 16px; border-top: 1px solid #fff; border-bottom: 2px solid #444; background: #f4f4f4; }
.a11y { display: flex; align-items: center; gap: 4px; margin-left: 28px; font-size: 17px; }
.views { display: flex; height: 32px; margin-left: auto; }
.views button { width: 60px; }
.views .on { background: #dedede; }
.zoom { display: flex; align-items: center; gap: 8px; margin-left: 8px; font-size: 19px; }
.zoom span { width: 52px; margin-left: 9px; text-align: right; }
.zoom input { appearance: none; width: 148px; height: 18px; margin: 0; background: linear-gradient(#616161, #616161) center / 100% 2px no-repeat; }
.zoom input::-webkit-slider-thumb { appearance: none; width: 8px; height: 17px; background: #616161; }
```
